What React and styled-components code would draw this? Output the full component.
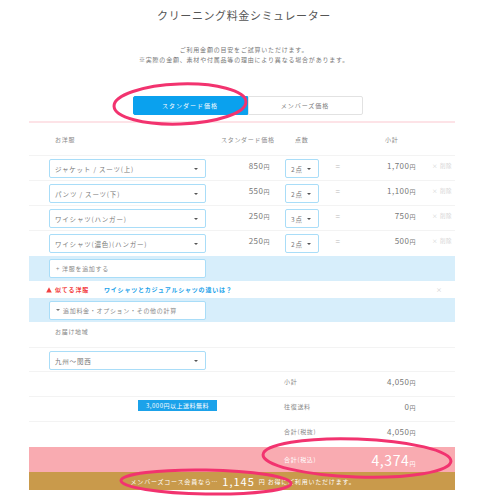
import React from "react";
import styled, { createGlobalStyle } from "styled-components";

const GlobalStyle = createGlobalStyle`
  body {
    margin: 0;
    background: #fff;
    font-family: "Noto Sans CJK JP", "Noto Sans", sans-serif;
    color: #666;
  }
`;

const Page = styled.div`
  position: relative;
  width: 484px;
  height: 500px;
  padding-top: 7px;
  box-sizing: border-box;
  overflow: hidden;
`;

const Title = styled.h1`
  margin: 0;
  padding-left: 4px;
  text-align: center;
  font-size: 11px;
  line-height: 16px;
  font-weight: 400;
  letter-spacing: 0.6px;
  color: #555;
`;

const Note = styled.p`
  margin: 22px 0 0;
  padding-left: 4px;
  text-align: center;
  font-size: 6px;
  line-height: 10px;
  letter-spacing: 0.8px;
  color: #777;
`;

const Tabs = styled.div`
  display: flex;
  justify-content: center;
  margin-top: 31px;
  padding-left: 11px;
`;

const Tab = styled.div`
  width: 115px;
  height: 19px;
  box-sizing: border-box;
  display: flex;
  align-items: center;
  justify-content: center;
  font-size: 6px;
  letter-spacing: 1px;
  background: ${({ $active }) => ($active ? "#0aa1ee" : "#fff")};
  color: ${({ $active }) => ($active ? "#fff" : "#777")};
  border: 1px solid ${({ $active }) => ($active ? "#0aa1ee" : "#e2e2e2")};
  border-radius: ${({ $active }) => ($active ? "2px 0 0 2px" : "0 2px 2px 0")};
`;

const Panel = styled.div`
  margin: 6px 29px 0;
  border-top: 2px solid #fde3e7;
`;

const HeadRow = styled.div`
  display: flex;
  align-items: center;
  height: 32px;
  border-bottom: 1px solid #f3f3f3;
  font-size: 6px;
  letter-spacing: 0.7px;
  color: #888;
`;

const Cell = styled.div`
  width: ${({ $w }) => $w}px;
  flex: none;
  text-align: ${({ $align }) => $align || "left"};
  padding-left: ${({ $pl }) => $pl || 0}px;
  box-sizing: border-box;
`;

const ItemRow = styled.div`
  display: flex;
  align-items: flex-start;
  height: 25px;
  box-sizing: border-box;
  padding-top: 3px;
  border-bottom: ${({ $last }) => ($last ? "none" : "1px solid #f3f3f3")};
`;

const Select = styled.div`
  width: ${({ $w }) => $w}px;
  height: 19px;
  box-sizing: border-box;
  border: 1px solid #a9ddf8;
  border-radius: 2px;
  background: #fff;
  display: flex;
  align-items: center;
  justify-content: space-between;
  padding: 0 7px 0 5px;
  font-size: 6.5px;
  letter-spacing: 0.8px;
  color: #777;
  flex: none;
`;

const Caret = styled.span`
  width: 0;
  height: 0;
  border-left: 2px solid transparent;
  border-right: 2px solid transparent;
  border-top: 2.5px solid #555;
`;

const Num = styled.div`
  width: ${({ $w }) => $w}px;
  flex: none;
  text-align: ${({ $align }) => $align || "right"};
  padding-top: 1px;
  font-size: 8px;
  letter-spacing: 0.5px;
  color: #777;
  box-sizing: border-box;
`;

const Eq = styled(Num)`
  color: #bbb;
  text-align: center;
`;

const Delete = styled.div`
  padding: 3px 0 0 16px;
  font-size: 5.5px;
  letter-spacing: 0.6px;
  color: #d4d4d4;
`;

const Band = styled.div`
  background: #d7eefb;
  height: ${({ $h }) => $h}px;
  display: flex;
  align-items: center;
  padding-left: 20px;
`;

const BandButton = styled.div`
  width: 157px;
  height: 19px;
  box-sizing: border-box;
  background: #fff;
  border: 1px solid #a9ddf8;
  border-radius: 2px;
  display: flex;
  align-items: center;
  gap: 2px;
  padding-left: 6px;
  font-size: 6px;
  letter-spacing: 0.7px;
  color: #888;
`;

const DownTri = styled.span`
  width: 0;
  height: 0;
  border-left: 2px solid transparent;
  border-right: 2px solid transparent;
  border-top: 2.5px solid #777;
  margin-right: 1px;
`;

const WarnRow = styled.div`
  height: 17px;
  display: flex;
  align-items: center;
  padding-left: 17px;
  font-size: 6px;
  letter-spacing: 0.8px;
  font-weight: 700;
`;

const WarnLabel = styled.span`
  color: #f24040;
  width: 58px;
  display: flex;
  align-items: center;
  gap: 3px;
`;

const WarnLink = styled.span`
  color: #1ba2ea;
  flex: 1;
`;

const CloseX = styled.span`
  color: #ccc;
  font-weight: 400;
  width: 19px;
`;

const AreaLabel = styled.div`
  height: 26px;
  box-sizing: border-box;
  padding: 5px 0 0 26px;
  font-size: 6px;
  letter-spacing: 0.7px;
  color: #888;
  border-bottom: 1px solid #f3f3f3;
`;

const AreaRow = styled.div`
  height: 24px;
  box-sizing: border-box;
  padding: 3px 0 0 20px;
  border-bottom: 1px solid #f3f3f3;
`;

const SumRow = styled.div`
  display: flex;
  align-items: flex-start;
  height: 25px;
  box-sizing: border-box;
  padding-top: 5px;
  border-bottom: ${({ $line }) => ($line ? "1px solid #f3f3f3" : "none")};
  font-size: 6px;
  letter-spacing: 0.7px;
  color: #888;
`;

const Badge = styled.div`
  margin: -2px 0 0 109px;
  width: 79px;
  height: 11px;
  background: #1ba2ea;
  color: #fff;
  font-size: 6px;
  letter-spacing: 0.5px;
  display: flex;
  align-items: center;
  justify-content: center;
  flex: none;
`;

const SumLabel = styled.div`
  width: 60px;
  flex: none;
  padding-left: ${({ $pl }) => $pl}px;
`;

const SumValue = styled.div`
  width: 72px;
  flex: none;
  text-align: right;
  margin-top: -1px;
  font-size: 8px;
  letter-spacing: 0.5px;
  color: #777;
`;

const Yen = styled.span`
  font-size: 6px;
`;

const TotalBand = styled.div`
  background: #f9abb1;
  height: 25px;
  display: flex;
  align-items: center;
  color: #fff;
  font-size: 6px;
  letter-spacing: 0.7px;
`;

const TotalValue = styled.div`
  width: 72px;
  text-align: right;
  font-size: 14px;
  letter-spacing: 0.6px;
`;

const MemberBand = styled.div`
  background: #c99a4b;
  height: 18px;
  display: flex;
  align-items: center;
  justify-content: center;
  gap: 4px;
  color: #fff;
  font-size: 6px;
  letter-spacing: 0.8px;
  padding-left: 2px;
`;

const BigNum = styled.span`
  font-size: 11px;
  letter-spacing: 1px;
`;

const Overlay = styled.svg`
  position: absolute;
  left: 0;
  top: 0;
  pointer-events: none;
`;

const items = [
  { name: "ジャケット / スーツ(上)", price: "850", qty: "2点", sub: "1,700" },
  { name: "パンツ / スーツ(下)", price: "550", qty: "2点", sub: "1,100" },
  { name: "ワイシャツ(ハンガー)", price: "250", qty: "3点", sub: "750" },
  { name: "ワイシャツ(濃色)(ハンガー)", price: "250", qty: "2点", sub: "500" },
];

export default function App() {
  return (
    <Page>
      <GlobalStyle />
      <Title>クリーニング料金シミュレーター</Title>
      <Note>
        ご利用金額の目安をご試算いただけます。
        <br />
        ※実際の金額、素材や付属品等の理由により異なる場合があります。
      </Note>
      <Tabs>
        <Tab $active>スタンダード価格</Tab>
        <Tab>メンバーズ価格</Tab>
      </Tabs>
      <Panel>
        <HeadRow>
          <Cell $w={192} $pl={26}>お洋服</Cell>
          <Cell $w={74}>スタンダード価格</Cell>
          <Cell $w={34}>点数</Cell>
          <Cell $w={90} $pl={56}>小計</Cell>
        </HeadRow>
        {items.map((it, i) => (
          <ItemRow key={i} $last={i === items.length - 1}>
            <Cell $w={20} />
            <Select $w={157}>
              {it.name}
              <Caret />
            </Select>
            <Num $w={64}>
              {it.price}
              <Yen>円</Yen>
            </Num>
            <Cell $w={15} />
            <Select $w={34}>
              {it.qty}
              <Caret />
            </Select>
            <Eq $w={38}>=</Eq>
            <Num $w={59}>
              {it.sub}
              <Yen>円</Yen>
            </Num>
            <Delete>× 削除</Delete>
          </ItemRow>
        ))}
        <Band $h={25}>
          <BandButton>+ 洋服を追加する</BandButton>
        </Band>
        <WarnRow>
          <WarnLabel>
            <svg width="6" height="6" viewBox="0 0 6 6">
              <path d="M3 0.3 L5.8 5.6 L0.2 5.6 Z" fill="#f24040" />
            </svg>
            似てる洋服
          </WarnLabel>
          <WarnLink>ワイシャツとカジュアルシャツの違いは？</WarnLink>
          <CloseX>×</CloseX>
        </WarnRow>
        <Band $h={24}>
          <BandButton>
            <DownTri />
            追加料金・オプション・その他の計算
          </BandButton>
        </Band>
        <AreaLabel>お届け地域</AreaLabel>
        <AreaRow>
          <Select $w={157}>
            九州〜関西
            <Caret />
          </Select>
        </AreaRow>
        <SumRow $line>
          <SumLabel $pl={255}>小計</SumLabel>
          <SumValue>
            4,050<Yen>円</Yen>
          </SumValue>
        </SumRow>
        <SumRow $line>
          <Badge>3,000円以上送料無料</Badge>
          <SumLabel $pl={67}>往復送料</SumLabel>
          <SumValue>
            0<Yen>円</Yen>
          </SumValue>
        </SumRow>
        <SumRow>
          <SumLabel $pl={255}>合計(税抜)</SumLabel>
          <SumValue>
            4,050<Yen>円</Yen>
          </SumValue>
        </SumRow>
        <TotalBand>
          <SumLabel $pl={255}>合計(税込)</SumLabel>
          <TotalValue>
            4,374<Yen>円</Yen>
          </TotalValue>
        </TotalBand>
        <MemberBand>
          <span>メンバーズコース会員なら…</span>
          <BigNum>1,145</BigNum>
          <span>円 お得にご利用いただけます。</span>
        </MemberBand>
      </Panel>
      <Overlay width="484" height="500" viewBox="0 0 484 500">
        <g fill="none" stroke="#f2336f" strokeWidth="3">
          <ellipse cx="180" cy="104" rx="66" ry="20" transform="rotate(-2 180 104)" />
          <ellipse cx="357" cy="458" rx="94" ry="19" transform="rotate(2 357 458)" />
          <ellipse cx="206" cy="482" rx="85" ry="12" transform="rotate(1 206 482)" />
        </g>
      </Overlay>
    </Page>
  );
}
